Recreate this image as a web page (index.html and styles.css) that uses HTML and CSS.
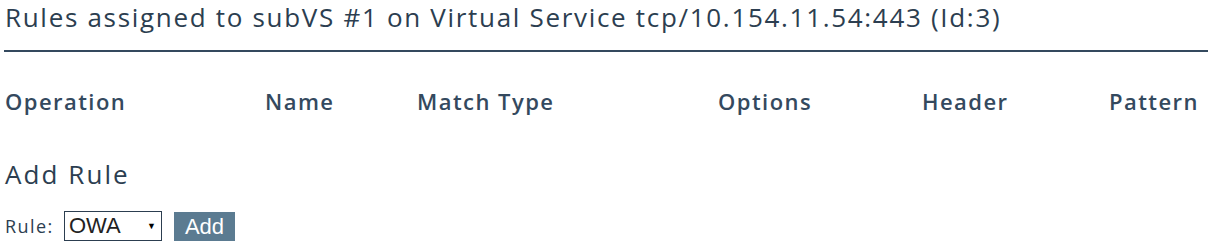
FILE: index.html
```html
<!DOCTYPE html>
<html>
<head>
<meta charset="utf-8">
<link rel="stylesheet" href="styles.css">
</head>
<body>
<div class="page">
  <h1 class="title">Rules assigned to subVS #1 on Virtual Service tcp/10.154.11.54:443 (Id:3)</h1>
  <hr class="rule-line">
  <table class="rules">
    <thead>
      <tr>
        <th class="c-op">Operation</th>
        <th class="c-name">Name</th>
        <th class="c-match">Match Type</th>
        <th class="c-opt">Options</th>
        <th class="c-hdr">Header</th>
        <th class="c-pat">Pattern</th>
      </tr>
    </thead>
  </table>
  <h2 class="sub">Add Rule</h2>
  <form class="add-form">
    <label class="lbl">Rule:</label>
    <div class="select"><span class="sel-text">OWA</span><span class="arrow">&#9660;</span></div>
    <button type="button" class="btn">Add</button>
  </form>
</div>
</body>
</html>
```
FILE: styles.css
```css
html, body {
  margin: 0;
  padding: 0;
  background: #ffffff;
}
body {
  font-family: "Open Sans", "Noto Sans", sans-serif;
  color: #2c3e50;
}
.page {
  padding: 0 1px 0 5px;
}
.title {
  margin: 0;
  font-size: 26px;
  font-weight: 400;
  line-height: 34px;
  letter-spacing: 0.065em;
  color: #2c3e50;
  white-space: nowrap;
}
.rule-line {
  margin: 16px 0 0 -1px;
  border: 0;
  border-top: 2px solid #34495e;
  height: 0;
}
.rules {
  width: 100%;
  border-collapse: collapse;
  margin-top: 34px;
}
.rules th {
  text-align: left;
  padding: 0;
  font-size: 22px;
  font-weight: 600;
  line-height: 30px;
  letter-spacing: 0.066em;
  color: #34495e;
  white-space: nowrap;
}
.c-op { width: 260px; }
.c-name { width: 152px; }
.c-match { width: 301px; }
.c-opt { width: 204px; }
.c-hdr { width: 187px; }
.sub {
  margin: 41px 0 0 0;
  font-size: 26px;
  font-weight: 400;
  line-height: 34px;
  letter-spacing: 0.08em;
  color: #2c3e50;
}
.add-form {
  display: flex;
  align-items: center;
  margin-top: 20px;
  height: 30px;
}
.lbl {
  font-size: 18px;
  letter-spacing: 0.08em;
  color: #2c3e50;
  width: 59px;
}
.select {
  box-sizing: border-box;
  width: 98px;
  height: 30px;
  border: 1px solid #2c3e50;
  display: flex;
  align-items: center;
  justify-content: space-between;
  padding: 0 5px 0 4px;
  font-family: "Liberation Sans", Arial, sans-serif;
  font-size: 22px;
  color: #222;
}
.arrow {
  font-size: 9px;
  color: #000;
}
.btn {
  margin-left: 12px;
  margin-top: 1px;
  width: 61px;
  height: 29px;
  border: 0;
  background: #5b7b91;
  color: #ffffff;
  font-family: "Liberation Sans", Arial, sans-serif;
  font-size: 22px;
  line-height: 29px;
  padding: 0;
}
```
